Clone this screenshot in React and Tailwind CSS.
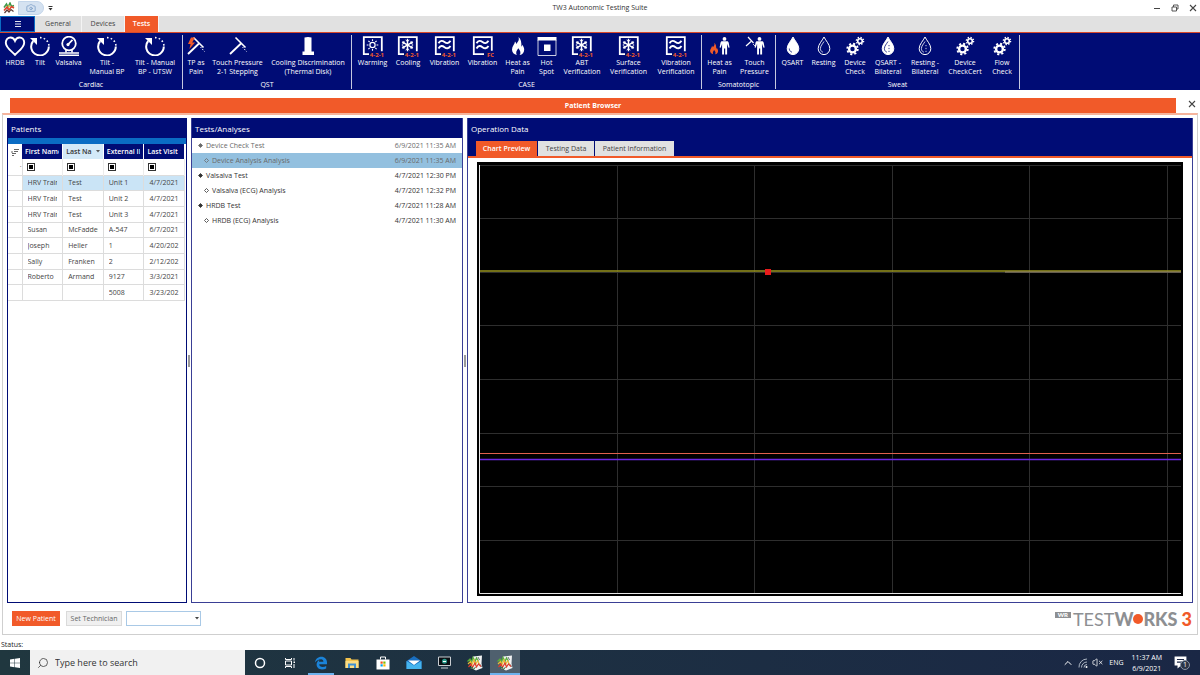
import { useState } from "react";
import clsx from "clsx";
import { Search, Camera, ChevronUp, VolumeX } from "lucide-react";

/* ---------- ribbon icons ---------- */

const HeartIcon = () => (
  <svg width="22" height="20" viewBox="0 0 22 20" fill="none" stroke="currentColor">
    <path
      d="M11 18.800C8.500 16 1.800 11.800 1.800 6.700c0-3 2.100-5.200 4.700-5.200 2.100 0 3.700 1.300 4.500 3.300.8-2 2.400-3.300 4.500-3.300 2.600 0 4.700 2.200 4.700 5.200 0 5.100-6.700 9.300-9.200 12.100z"
      strokeWidth="1.900"
    />
  </svg>
);

const TiltIcon = () => (
  <svg width="22" height="20" viewBox="0 0 22 20" fill="none" stroke="currentColor">
    <path d="M4.200 5A8.800 8.800 0 1 0 19.800 10.500" strokeWidth="2" />
    <path d="M11 1.600a9 9 0 0 1 9 8.400" strokeWidth="1.600" strokeDasharray="1.600 2.200" />
    <path d="M1 2h7v7z" fill="currentColor" stroke="none" />
  </svg>
);

const GaugeIcon = () => (
  <svg width="22" height="20" viewBox="0 0 22 20" fill="none" stroke="currentColor">
    <circle cx="11" cy="7.5" r="6.8" strokeWidth="1.8" />
    <path d="M9.5 9 14.5 3.8" strokeWidth="1.8" />
    <circle cx="10" cy="8.6" r="1.6" fill="currentColor" stroke="none" />
    <path d="M8 14v2.5M14 14v2.5" strokeWidth="1.6" />
    <path d="M1 17h20M1 19.3h20" strokeWidth="1.5" />
  </svg>
);

const Stylus = () => (
  <>
    <path d="M2 18 13 7.5" strokeWidth="1.8" />
    <path d="M7.5 1.5 17.5 11.5" strokeWidth="1.6" />
    <path d="m14.5 11 4 4.5" strokeWidth="1" strokeDasharray="1.5 1.2" />
  </>
);

const TouchIcon = () => (
  <svg width="20" height="20" viewBox="0 0 20 20" fill="none" stroke="currentColor">
    <Stylus />
  </svg>
);

const TouchPainIcon = () => (
  <svg width="20" height="20" viewBox="0 0 20 20" fill="none" stroke="currentColor">
    <Stylus />
    <path d="M5 1.5 2 8h2.6L3.4 13 9 6.4H6.2L9 1.5z" fill="#f15a29" stroke="none" />
  </svg>
);

const DiskIcon = () => (
  <svg width="20" height="20" viewBox="0 0 20 20" fill="currentColor">
    <path d="M6.500 1.500q3.500-1 7 0V15.500H16v3.500H4.500v-3.500h2z" />
  </svg>
);

const frames = {
  sun: (
    <>
      <circle cx="10.5" cy="9" r="2.6" strokeWidth="1.2" />
      <path
        d="M10.5 3.2v1.8M10.5 13v1.8M4.7 9h1.8M14.5 9h1.8M6.4 4.9l1.3 1.3M13.3 11.8l1.3 1.3M6.4 13.1l1.3-1.3M13.3 6.2l1.3-1.3"
        strokeWidth="1.1"
      />
    </>
  ),
  snow: (
    <>
      <path d="M10.5 2.8v12.4M5.1 5.9l10.8 6.2M5.1 12.1l10.8-6.2" strokeWidth="1.4" />
      <path
        d="m8.7 4 1.8 1.6L12.3 4M8.7 14l1.8-1.6 1.8 1.6M4.9 8.3l2.3-.9-.4-2.4M16.1 9.7l-2.3.9.4 2.4M4.9 9.7l2.3.9-.4 2.4M16.1 8.3l-2.3-.9.4-2.4"
        strokeWidth="1"
      />
    </>
  ),
  wave: (
    <path
      d="M4.500 7.200C6.500 4 8.500 4.500 10.500 6s4 1.800 6-1.200M4.500 12.400c2-3.200 4-2.700 6-1.200s4 1.800 6-1.200"
      strokeWidth="1.900"
    />
  ),
};

function FrameIcon({ kind, tag = "4-2-1" }) {
  const wide = tag.length > 2;
  return (
    <svg width="22" height="22" viewBox="0 0 22 22" fill="none" stroke="currentColor" className="-mb-0.5">
      <path d={wide ? "M7 18.2H1.8V1.2h18v14" : "M12 18.2H1.8V1.2h18v13.5"} strokeWidth="1.8" />
      {frames[kind]}
      <text
        x="22"
        y="20.5"
        textAnchor="end"
        fontSize="6"
        fontWeight="700"
        fill="#f15a29"
        stroke="none"
        fontFamily="Open Sans, sans-serif"
      >
        {tag}
      </text>
    </svg>
  );
}

const FLAME =
  "M10.5 1c1 3.500-.5 4.500-2.200 7C8 6.800 7.600 6.200 7 5.600 6.800 8.500 4 10.300 4 13.600 4 16.500 6 18.600 8.800 19 7.400 16.600 8.600 14.400 10.300 12.200c2 2.300 3 4.700 1.300 6.800 3-.5 4.600-2.700 4.600-5.300 0-2.200-1-3.500-2-5-.1 1-.3 1.500-.8 2C13.600 6.500 13 3 10.500 1z";

const FlameIcon = () => (
  <svg width="20" height="20" viewBox="0 0 20 20" fill="currentColor">
    <path d={FLAME} />
  </svg>
);

const HotSpotIcon = () => (
  <svg width="20" height="20" viewBox="0 0 20 20" fill="currentColor">
    <path d="M.5 1h19v3.500H.5z" />
    <path d="M1 4v15.500h18V4" fill="none" stroke="currentColor" strokeWidth=".8" />
    <path d="M7 8.500h6.500v6.500H7z" />
  </svg>
);

const Person = () => (
  <path
    d="M14.500 1a1.900 1.900 0 1 1 0 3.800 1.900 1.900 0 0 1 0-3.800zM12 5.300h5c1 0 1.500.6 1.700 1.500l.9 4.700-1.100.3-1.400-4v10.700h-1.900v-6h-1.200v6h-1.900V7.800l-1.400 4-1.100-.3.900-4.700c.2-.9.600-1.500 1.500-1.500z"
    fill="currentColor"
    stroke="none"
  />
);

const HeatPersonIcon = () => (
  <svg width="20" height="20" viewBox="0 0 20 20">
    <path d={FLAME} fill="#f15a29" transform="translate(-2.500 6) scale(.65)" />
    <Person />
  </svg>
);

const TouchPersonIcon = () => (
  <svg width="20" height="20" viewBox="0 0 20 20" fill="none" stroke="currentColor">
    <path d="M1 10 6 5.500M3 1l5.500 6" strokeWidth="1.200" />
    <path d="m8 8 2 2" strokeWidth=".8" />
    <Person />
  </svg>
);

const DROP = "M10 1c1.800 3.900 5.800 7.200 5.800 11.600a5.800 6 0 0 1-11.600 0C4.200 8.200 8.200 4.900 10 1z";

const DropIcon = ({ filled, split }) => (
  <svg width="20" height="20" viewBox="0 0 20 20" fill="none" stroke="currentColor">
    <path d={DROP} fill={filled ? "currentColor" : "none"} strokeWidth="1" />
    <path
      d={filled && !split ? "M6.300 12.500c0 1.800 1 3.200 2.600 3.700" : "M10 5.500c-1.500 2.500-3.600 4.500-3.600 7.100 0 1.700 1 3 2.400 3.600"}
      stroke={filled ? "#000c75" : "currentColor"}
      strokeWidth=".8"
    />
    {split && (
      <path
        d="M11 9v7"
        stroke={filled ? "#000c75" : "currentColor"}
        strokeWidth=".8"
        strokeDasharray="1.200 1.700"
      />
    )}
  </svg>
);

const GearsIcon = () => (
  <svg width="20" height="20" viewBox="0 0 20 20" fill="none" stroke="currentColor">
    <circle cx="7.500" cy="13" r="3.400" strokeWidth="2.400" />
    <circle cx="7.500" cy="13" r="5.300" strokeWidth="1.800" strokeDasharray="2.080 2.080" />
    <circle cx="15" cy="5" r="2.300" strokeWidth="1.600" />
    <circle cx="15" cy="5" r="3.600" strokeWidth="1.400" strokeDasharray="1.410 1.410" />
  </svg>
);

/* ---------- data ---------- */

const ribbon = [
  {
    name: "Cardiac",
    className: "pl-0.5 pr-px",
    items: [
      { lines: ["HRDB"], icon: <HeartIcon />, w: "w-[26px]" },
      { lines: ["Tilt"], icon: <TiltIcon />, w: "w-[24px]" },
      { lines: ["Valsalva"], icon: <GaugeIcon />, w: "w-[33px]" },
      { lines: ["Tilt -", "Manual BP"], icon: <TiltIcon />, w: "w-[44px]" },
      { lines: ["Tilt - Manual", "BP - UTSW"], icon: <TiltIcon />, w: "w-[52px]" },
    ],
  },
  {
    name: "QST",
    className: "pr-px",
    items: [
      { lines: ["TP as", "Pain"], icon: <TouchPainIcon />, w: "w-[26px]" },
      { lines: ["Touch Pressure", "2-1 Stepping"], icon: <TouchIcon />, w: "w-[57px]" },
      { lines: ["Cooling Discrimination", "(Thermal Disk)"], icon: <DiskIcon />, w: "w-[84px]" },
    ],
  },
  {
    name: "CASE",
    className: "pl-[3px] pr-0.5",
    items: [
      { lines: ["Warming"], icon: <FrameIcon kind="sun" />, w: "w-[35px]" },
      { lines: ["Cooling"], icon: <FrameIcon kind="snow" />, w: "w-[36px]" },
      { lines: ["Vibration"], icon: <FrameIcon kind="wave" />, w: "w-[37px]" },
      { lines: ["Vibration"], icon: <FrameIcon kind="wave" tag="FC" />, w: "w-[39px]" },
      { lines: ["Heat as", "Pain"], icon: <FlameIcon />, w: "w-[31px]" },
      { lines: ["Hot", "Spot"], icon: <HotSpotIcon />, w: "w-[27px]" },
      { lines: ["ABT", "Verification"], icon: <FrameIcon kind="snow" />, w: "w-[44px]" },
      { lines: ["Surface", "Verification"], icon: <FrameIcon kind="snow" />, w: "w-[49px]" },
      { lines: ["Vibration", "Verification"], icon: <FrameIcon kind="wave" />, w: "w-[46px]" },
    ],
  },
  {
    name: "Somatotopic",
    className: "pl-px pr-0.5",
    items: [
      { lines: ["Heat as", "Pain"], icon: <HeatPersonIcon />, w: "w-[33px]" },
      { lines: ["Touch", "Pressure"], icon: <TouchPersonIcon />, w: "w-[37px]" },
    ],
  },
  {
    name: "Sweat",
    className: "pl-px",
    items: [
      { lines: ["QSART"], icon: <DropIcon filled />, w: "w-[31px]" },
      { lines: ["Resting"], icon: <DropIcon />, w: "w-[31px]" },
      { lines: ["Device", "Check"], icon: <GearsIcon />, w: "w-[32px]" },
      { lines: ["QSART -", "Bilateral"], icon: <DropIcon filled split />, w: "w-[34px]" },
      { lines: ["Resting -", "Bilateral"], icon: <DropIcon split />, w: "w-[40px]" },
      { lines: ["Device", "CheckCert"], icon: <GearsIcon />, w: "w-[40px]" },
      { lines: ["Flow", "Check"], icon: <GearsIcon />, w: "w-[34px]" },
    ],
  },
];

const patients = [
  ["HRV Training", "Test", "Unit 1", "4/7/2021"],
  ["HRV Training", "Test", "Unit 2", "4/7/2021"],
  ["HRV Training", "Test", "Unit 3", "4/7/2021"],
  ["Susan", "McFadden", "A-547", "6/7/2021"],
  ["Joseph", "Heller", "1", "4/20/2021"],
  ["Sally", "Franken", "2", "2/12/2021"],
  ["Roberto", "Armand", "9127", "3/3/2021"],
  ["", "", "5008", "3/23/2021"],
];

const tests = [
  { label: "Device Check Test", time: "6/9/2021 11:35 AM", muted: true },
  { label: "Device Analysis Analysis", time: "6/9/2021 11:35 AM", child: true, selected: true },
  { label: "Valsalva Test", time: "4/7/2021 12:30 PM" },
  { label: "Valsalva (ECG) Analysis", time: "4/7/2021 12:32 PM", child: true },
  { label: "HRDB Test", time: "4/7/2021 11:28 AM" },
  { label: "HRDB (ECG) Analysis", time: "4/7/2021 11:30 AM", child: true },
];

/* ---------- window chrome ---------- */

const AppLogo = ({ size = 12 }) => (
  <svg width={size} height={size} viewBox="0 0 12 12" fill="none">
    <path d="M1 5.500 3.500 2l1.500 3L7 1l1.500 3.500 2.500-1" stroke="#3f9a4a" strokeWidth="1.500" />
    <path d="M1 8.500 4 5l2 3 2.500-3.500L11 6" stroke="#e0452c" strokeWidth="1.500" />
    <path d="M1.500 11 4 8l2 2 2-2.500 2.500 2" stroke="#5b3a35" strokeWidth="1.200" />
    <path d="M5 3.500 6.500 5" stroke="#e8b53a" strokeWidth="1.500" />
  </svg>
);

const CloseGlyph = () => (
  <svg width="8" height="8" viewBox="0 0 8 8" stroke="#444" strokeWidth="1.100">
    <path d="m1 1 6 6M7 1 1 7" />
  </svg>
);

function TitleBar() {
  return (
    <header className="grid h-4 grid-cols-3 items-center bg-white">
      <div className="flex h-4 items-center">
        <div className="flex w-[18px] justify-center">
          <AppLogo />
        </div>
        <button
          aria-label="Screenshot"
          className="flex h-3.5 w-[26px] items-center justify-center rounded-r-full border border-[#c3d5ea] bg-[#d5e2f1] text-[#7d9fc8]"
        >
          <Camera size={10} />
        </button>
        <button aria-label="Customize toolbar" className="flex w-3 justify-center">
          <svg width="5" height="5" viewBox="0 0 5 5" fill="#333">
            <path d="M.5 0h4v1h-4zM.5 2h4l-2 2.500z" />
          </svg>
        </button>
      </div>
      <h1 className="text-center text-[7px] leading-4 text-[#333]">TW3 Autonomic Testing Suite</h1>
      <div className="flex justify-end gap-2.5 pr-[3px] text-[#444]">
        <button aria-label="Minimize">
          <svg width="8" height="8" viewBox="0 0 8 8" stroke="currentColor">
            <path d="M1 4.500h6" />
          </svg>
        </button>
        <button aria-label="Restore">
          <svg width="8" height="8" viewBox="0 0 8 8" fill="none" stroke="currentColor" strokeWidth=".9">
            <path d="M1 3h4.500v4H1zM2.500 3V1H7v4H5.500" />
          </svg>
        </button>
        <button aria-label="Close">
          <CloseGlyph />
        </button>
      </div>
    </header>
  );
}

function RibbonTabs() {
  const [tab, setTab] = useState("Tests");
  return (
    <nav className="flex h-[17px] border-b border-[#d8492a] bg-[#e1e1e1] text-[7px] text-[#444]">
      <button
        aria-label="Menu"
        className="flex w-[35px] items-center justify-center border border-[#0a6cc4] bg-[#000c75]"
      >
        <svg width="6" height="6" viewBox="0 0 6 6" stroke="#fff">
          <path d="M0 .5h6M0 3h6M0 5.500h6" strokeWidth=".9" />
        </svg>
      </button>
      {[
        ["General", "w-[47px]"],
        ["Devices", "w-[43px]"],
        ["Tests", "w-[34px]"],
      ].map(([name, width]) => (
        <button
          key={name}
          onClick={() => setTab(name)}
          className={clsx(
            "border-r border-[#f4f4f4]",
            width,
            tab === name && "bg-[#f15a29] font-semibold text-white"
          )}
        >
          {name}
        </button>
      ))}
    </nav>
  );
}

function Ribbon() {
  return (
    <div className="flex h-[57px] bg-[#000c75] text-[7px] leading-[9px] text-white">
      {ribbon.map((group) => (
        <section key={group.name} className="mt-0.5 mb-px flex flex-col justify-between border-r border-[#c5c8e0]">
          <div className={clsx("flex pt-px", group.className)}>
            {group.items.map((item) => (
              <button
                key={item.lines.join(" ") + item.w}
                className={clsx("flex flex-col items-center whitespace-nowrap", item.w)}
              >
                <span className="mb-0.5 flex h-5 items-start justify-center">{item.icon}</span>
                {item.lines.map((line) => (
                  <span key={line}>{line}</span>
                ))}
              </button>
            ))}
          </div>
          <p className="text-center">{group.name}</p>
        </section>
      ))}
    </div>
  );
}

/* ---------- panels ---------- */

const PanelTitle = ({ children }) => (
  <h2 className="h-5 shrink-0 bg-[#000c75] px-[3px] text-[8px] leading-[21px] text-white">{children}</h2>
);

const Splitter = () => (
  <div className="flex w-1 shrink-0 items-center justify-center">
    <div className="h-3 w-0.5 border-x border-[#9a9a9a]" />
  </div>
);

function PatientsPanel() {
  return (
    <section className="flex w-[180px] shrink-0 flex-col border border-t-0 border-[#000c75]">
      <PanelTitle>Patients</PanelTitle>
      <div className="h-1.5 bg-[#0a6cc4]" />
      <table className="h-[157px] w-[177px] table-fixed border-collapse text-left text-[7px] leading-[9px] text-[#444]">
        <thead>
          <tr className="h-[15px] text-white">
            <th className="w-[14px] bg-white">
              <svg width="8" height="8" viewBox="0 0 8 8" stroke="#555" className="mx-auto">
                <path d="M3 1.500h5M3 3.500h4M1 5.500h4M1 7.500h2M1 5V3" strokeWidth=".9" />
              </svg>
            </th>
            {["First Name", "Last Na", "External ID", "Last Visit"].map((name, i) => (
              <th
                key={name}
                className={clsx(
                  "border-r border-white p-0 font-semibold",
                  i === 1 ? "bg-[#d3e9f8] font-normal text-[#333]" : "bg-[#000c75]"
                )}
              >
                <div className="mr-[3px] ml-[3px] flex items-center justify-between overflow-hidden whitespace-nowrap">
                  {name}
                  {i === 1 && (
                    <svg width="4" height="3" viewBox="0 0 4 3" fill="#555">
                      <path d="M0 0h4L2 2.500z" />
                    </svg>
                  )}
                </div>
              </th>
            ))}
          </tr>
        </thead>
        <tbody>
          <tr className="h-4 border-b border-[#dcdcdc]">
            <td className="border-r border-[#dcdcdc] p-0 text-right">·</td>
            {["First name", "Last name", "External ID", "Last visit"].map((name) => (
              <td key={name} className="border-r border-[#ececec] p-0 pl-1">
                <button aria-label={`Filter ${name}`} className="block size-2 border border-[#333] p-px">
                  <span className="block size-1 bg-black" />
                </button>
              </td>
            ))}
          </tr>
          {patients.map((row, i) => (
            <tr key={i} className="border-b border-[#dcdcdc]">
              <td className="border-r border-[#dcdcdc] p-0" />
              {row.map((cell, j) => (
                <td key={j} className={clsx("border-r border-[#dcdcdc] p-0", i === 0 && "bg-[#cae4f6]")}>
                  <div className="mr-[5px] ml-[5px] overflow-hidden whitespace-nowrap">{cell}</div>
                </td>
              ))}
            </tr>
          ))}
        </tbody>
      </table>
    </section>
  );
}

function TestsPanel() {
  return (
    <section className="flex w-[272px] shrink-0 flex-col border border-t-0 border-[#3a3f95]">
      <PanelTitle>Tests/Analyses</PanelTitle>
      <ul className="text-[7px] leading-[15px] text-[#333]">
        {tests.map((t) => (
          <li
            key={t.label}
            className={clsx(
              "flex items-center gap-[3px] pr-1.5",
              t.child ? "pl-3" : "pl-1.5",
              t.selected && "bg-[#93c0df]",
              (t.selected || t.muted) && "text-[#6a6a6a]"
            )}
          >
            <svg width="5" height="5" viewBox="0 0 5 5" stroke="currentColor" strokeWidth=".8">
              <path d="M2.500.5l2 2-2 2-2-2z" fill={t.child ? "none" : "currentColor"} />
            </svg>
            <span className="grow">{t.label}</span>
            <time>{t.time}</time>
          </li>
        ))}
      </ul>
    </section>
  );
}

function Chart() {
  return (
    <svg
      viewBox="0 0 706 434"
      preserveAspectRatio="none"
      className="h-0 w-full grow bg-black"
      role="img"
      aria-label="Chart preview"
    >
      <g stroke="#2e2e2e" shapeRendering="crispEdges">
        {[140, 277, 415, 552, 690].map((x) => (
          <line key={x} x1={x + 0.5} x2={x + 0.5} y1="3" y2="431" />
        ))}
        {[3, 56, 110, 163, 217, 271, 324, 378].map((y) => (
          <line key={y} x1="3" x2="704" y1={y + 0.5} y2={y + 0.5} />
        ))}
      </g>
      <path d="M2.500 3v428.500H704" fill="none" stroke="#e8e8e8" />
      <path d="M3 109h701" stroke="#9a9620" strokeWidth="1.400" />
      <path d="M528 110h176" stroke="#9a8a70" />
      <path d="M3 291.500h701" stroke="#e0604e" strokeWidth="1.200" />
      <path d="M3 297.500h701" stroke="#6a28e0" strokeWidth="1.300" />
      <rect x="288" y="107" width="6" height="6" fill="#e81c1c" />
    </svg>
  );
}

function OperationPanel() {
  const [tab, setTab] = useState("Chart Preview");
  return (
    <section className="flex min-w-0 grow flex-col border border-t-0 border-[#3a3f95]">
      <PanelTitle>Operation Data</PanelTitle>
      <div className="flex h-5 shrink-0 items-end gap-px border-b-2 border-[#f15a29] bg-[#000c75] pl-2 text-[7px] leading-[15px]">
        {[
          ["Chart Preview", "w-[61px]"],
          ["Testing Data", "w-[56px]"],
          ["Patient Information", "w-[79px]"],
        ].map(([name, width]) => (
          <button
            key={name}
            onClick={() => setTab(name)}
            className={clsx(
              width,
              tab === name ? "bg-[#f15a29] font-semibold text-white" : "bg-[#e1e1e1] text-[#444]"
            )}
          >
            {name}
          </button>
        ))}
      </div>
      <div className="flex grow flex-col px-[9px] pt-1 pb-1.5">
        <Chart />
      </div>
    </section>
  );
}

function Brand() {
  return (
    <div className="flex items-center pr-px font-[Lato,sans-serif] text-[18px] leading-[18px] text-[#8d8f92]">
      <span className="mr-0.5 mb-2 bg-[#8d8f92] px-[3px] text-[6px] leading-[6px] font-black text-white">WR</span>
      <span>TEST</span>
      <span className="font-black">W</span>
      <span className="size-2.5 rounded-full bg-[#f15a29]" />
      <span className="font-black">RKS</span>
      <span className="ml-1 font-black text-[#f15a29]">3</span>
    </div>
  );
}

function PatientBrowser() {
  return (
    <main className="mt-2 flex grow flex-col px-0.5">
      <div className="flex h-[15px] shrink-0 pl-2">
        <h2 className="grow bg-[#f15a29] text-center text-[7px] leading-[15px] font-bold text-white">
          Patient Browser
        </h2>
        <button aria-label="Close browser" className="flex w-[22px] justify-end pt-0.5 pr-0.5">
          <CloseGlyph />
        </button>
      </div>
      <div className="flex grow flex-col border border-t-2 border-[#cfcfcf] border-t-[#f6b49c] px-1 pt-[3px]">
        <div className="flex grow">
          <PatientsPanel />
          <Splitter />
          <TestsPanel />
          <Splitter />
          <OperationPanel />
        </div>
        <div className="flex h-[31px] items-center justify-between pl-[5px] text-[7px] leading-[13px]">
          <div className="flex gap-1">
            <button className="mr-0.5 w-12 bg-[#f15a29] text-white">New Patient</button>
            <button className="w-14 border border-[#dadada] bg-[#f0f0f0] text-[#666]">Set Technician</button>
            <div className="relative flex">
              <select
                aria-label="Technician"
                className="w-[75px] appearance-none border border-[#a9c9e6] bg-white"
              >
                <option></option>
              </select>
              <svg
                width="4"
                height="3"
                viewBox="0 0 4 3"
                fill="#444"
                className="pointer-events-none absolute top-1.5 right-0.5"
              >
                <path d="M0 0h4L2 2.500z" />
              </svg>
            </div>
          </div>
          <Brand />
        </div>
      </div>
    </main>
  );
}

/* ---------- taskbar ---------- */

const taskIcons = [
  {
    name: "Cortana",
    icon: (
      <svg width="12" height="12" viewBox="0 0 12 12" fill="none" stroke="#fff">
        <circle cx="6" cy="6" r="4.500" strokeWidth="1.500" />
      </svg>
    ),
    w: "w-[30px]",
  },
  {
    name: "Task view",
    icon: (
      <svg width="12" height="12" viewBox="0 0 12 12" fill="none" stroke="#fff">
        <path d="M1.500 4h6v4h-6zM1.500 1v1.500h6V1M1.500 11V9.500h6V11M10 1v2.500M10 7v4" />
        <path d="M9.500 4.500h1.500v1.500H9.500z" fill="#fff" stroke="none" />
      </svg>
    ),
    w: "w-[30px]",
  },
  {
    name: "Edge",
    icon: (
      <svg width="14" height="14" viewBox="0 0 14 14">
        <path
          d="M1 6.500C1.500 3 4 .8 7.300.8c3.500 0 5.700 2.500 5.700 5.800v1.700H5.200c.1 1.800 1.500 2.700 3.300 2.700 1.300 0 2.600-.4 3.700-1.100v2.600c-1.200.7-2.600 1-4.200 1-3.200 0-5.400-1.900-5.400-4.900 0-2 1-3.700 2.900-4.700-.4.500-.5 1.200-.5 1.800h4.400c0-1.400-.8-2.400-2.300-2.400C4.500 3.300 2.200 4.600 1 6.500z"
          fill="#1b83d8"
        />
      </svg>
    ),
    w: "w-[31px]",
    running: true,
  },
  {
    name: "File Explorer",
    icon: (
      <svg width="14" height="12" viewBox="0 0 14 12">
        <path d="M.5 1h5l1 1.500h7V11H.5z" fill="#f3c34c" />
        <path d="M.5 4h13v7H.5z" fill="#fbdc82" />
        <path d="M3 6.500h8V11H9V8.500H5V11H3z" fill="#3f8fd2" />
      </svg>
    ),
    w: "w-[31px]",
  },
  {
    name: "Store",
    icon: (
      <svg width="14" height="14" viewBox="0 0 14 14">
        <path d="M4.500 3.500V1h5v2.500" fill="none" stroke="#fff" />
        <path d="M.5 3.500h13v10H.5z" fill="#fff" />
        <path d="M4.500 5.500h2.200v2.200H4.500z" fill="#f25022" />
        <path d="M7.300 5.500h2.200v2.200H7.300z" fill="#7fba00" />
        <path d="M4.500 8.300h2.200v2.200H4.500z" fill="#00a4ef" />
        <path d="M7.300 8.300h2.200v2.200H7.300z" fill="#ffb900" />
      </svg>
    ),
    w: "w-[31px]",
  },
  {
    name: "Mail",
    icon: (
      <svg width="16" height="13" viewBox="0 0 16 13">
        <path d="M.5 5 8 0l7.500 5v8H.5z" fill="#1a6fc0" />
        <path d="M2 4.500h12L8 9z" fill="#fff" />
        <path d="M.5 5 8 9.500 15.500 5v8H.5z" fill="#45b4ee" />
      </svg>
    ),
    w: "w-[31px]",
  },
  {
    name: "Monitor",
    icon: (
      <svg width="13" height="13" viewBox="0 0 13 13">
        <path d="M.5 1h12v8.500H.5z" fill="#0b0f14" stroke="#c9ced2" />
        <path d="M3 12h7" stroke="#c9ced2" />
        <circle cx="6.500" cy="5.200" r="2.500" fill="#2a9c8c" />
        <path d="M5 5.500h3" stroke="#fff" />
      </svg>
    ),
    w: "w-[31px]",
  },
  { name: "TestWorks", icon: <TaskLogo />, w: "w-[30px]" },
  { name: "TestWorks 3", icon: <TaskLogo />, w: "w-[30px]", running: true, active: true },
];

function TaskLogo() {
  return (
    <svg width="16" height="16" viewBox="0 0 16 16" fill="none">
      <path d="m6 1.500 9-1-.5 8 1 4.500L9 15.500 4 13z" fill="#f1f2f3" />
      <path d="m11 2 1.500 3M13.500 9.500l1 2.500" stroke="#6d7478" />
      <path d="M.5 6.500 3 4l1.500 3L6 2.500l2 4L9.500 3l2 3.500" stroke="#58ab3c" strokeWidth="1.300" />
      <path d="M1 9l2.500-2.500L5 9.500 7 5l1.500 4.500L10.500 6l2 3" stroke="#eabd34" strokeWidth="1.200" />
      <path d="M1.500 12 4 9l1.500 3.500L8 8l1.500 4L11.500 9l2.500 2.500" stroke="#dc3e2b" strokeWidth="1.200" />
      <path d="m3 13.500 2-1.500 1.500 2.500L8.500 12" stroke="#2f6f3a" />
    </svg>
  );
}

function Taskbar() {
  return (
    <footer className="flex h-[25px] shrink-0 items-stretch bg-linear-to-r from-[#20373f] to-[#1a2745] text-white">
      <button aria-label="Start" className="flex w-[30px] items-center justify-center">
        <svg width="10" height="10" viewBox="0 0 10 10" fill="#fff">
          <path d="M0 1.400 4.500.8v3.900H0zM5 .7 10 0v4.700H5zM0 5.300h4.500v3.900L0 8.600zM5 5.300h5V10l-5-.7z" />
        </svg>
      </button>
      <label className="flex w-[215px] items-center bg-[#f1f1f1] pl-[7px] text-[#333]">
        <Search size={12} strokeWidth={1.500} className="-scale-x-100" />
        <input
          aria-label="Search"
          placeholder="Type here to search"
          className="ml-1.5 w-40 bg-transparent text-[9px] outline-none placeholder:text-[#333]"
        />
      </label>
      {taskIcons.map((t) => (
        <button
          key={t.name}
          aria-label={t.name}
          className={clsx("flex flex-col items-center", t.w, t.active && "bg-[#4f606e]")}
        >
          <span className="flex grow items-center">{t.icon}</span>
          {t.running && <span className={clsx("-mt-0.5 h-0.5 bg-[#6cb2ee]", t.active ? "w-full" : "w-[26px]")} />}
        </button>
      ))}
      <div className="ml-auto flex items-center pr-[13px] text-[7px] leading-[11px]">
        <ChevronUp size={12} />
        <svg width="10" height="10" viewBox="0 0 10 10" fill="none" stroke="#aab4c2" className="ml-1">
          <path d="M1 9.500A8 8 0 0 1 9 1M3.500 9.500A5.500 5.500 0 0 1 9 4M6 9.500a3 3 0 0 1 3-3" />
          <circle cx="8.500" cy="9" r="1" fill="#fff" stroke="none" />
        </svg>
        <VolumeX size={11} strokeWidth={1.700} className="ml-1" />
        <span className="ml-1.5">ENG</span>
        <div className="ml-2 text-center">
          <p>11:37 AM</p>
          <p>6/9/2021</p>
        </div>
        <button aria-label="Notifications" className="relative ml-3">
          <svg width="13" height="13" viewBox="0 0 11 11">
            <path d="M.5.5h10V8H6l-3 2.500V8H.5z" fill="#fff" />
            <path d="M2.500 3h6M2.500 5.200h6" stroke="#1a2745" strokeWidth=".9" />
          </svg>
          <span className="absolute top-1 left-1.5 size-[10px] rounded-full border border-[#8a94a5] bg-[#2b3547] text-center text-[7px] leading-[8px]">
            1
          </span>
        </button>
      </div>
    </footer>
  );
}

export default function App() {
  return (
    <div className="flex min-h-screen flex-col bg-white font-['Open_Sans',sans-serif]">
      <TitleBar />
      <RibbonTabs />
      <Ribbon />
      <PatientBrowser />
      <p className="h-[15px] shrink-0 pt-1 pl-px text-[7px] leading-[11px] text-[#222]">Status:</p>
      <Taskbar />
    </div>
  );
}
